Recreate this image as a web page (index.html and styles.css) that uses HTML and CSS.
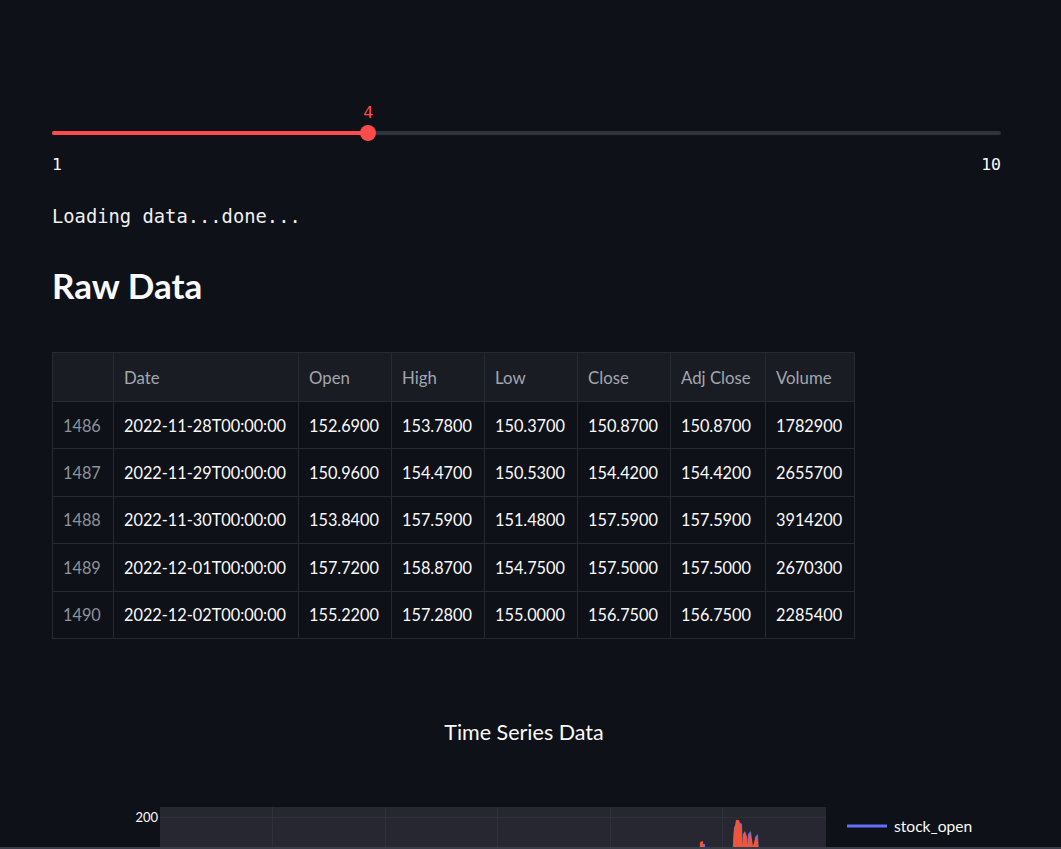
FILE: index.html
```html
<!DOCTYPE html>
<html>
<head>
<meta charset="utf-8">
<link rel="stylesheet" href="styles.css">
</head>
<body>
<main class="main">
  <section class="slider">
    <div class="track">
      <div class="fill" style="width:33.333%"></div>
      <div class="thumb" style="left:33.333%"><span class="thumb-value">4</span></div>
    </div>
    <div class="ticks"><span>1</span><span>10</span></div>
  </section>

  <pre class="text">Loading data...done...</pre>

  <h2 class="heading">Raw Data</h2>

  <table class="df">
    <colgroup>
      <col class="c-idx"><col class="c-date"><col class="c-num"><col class="c-num"><col class="c-num"><col class="c-num"><col class="c-adj"><col class="c-vol">
    </colgroup>
    <thead>
      <tr><th></th><th>Date</th><th>Open</th><th>High</th><th>Low</th><th>Close</th><th>Adj Close</th><th>Volume</th></tr>
    </thead>
    <tbody>
      <tr><th>1486</th><td>2022-11-28T00:00:00</td><td>152.6900</td><td>153.7800</td><td>150.3700</td><td>150.8700</td><td>150.8700</td><td>1782900</td></tr>
      <tr><th>1487</th><td>2022-11-29T00:00:00</td><td>150.9600</td><td>154.4700</td><td>150.5300</td><td>154.4200</td><td>154.4200</td><td>2655700</td></tr>
      <tr><th>1488</th><td>2022-11-30T00:00:00</td><td>153.8400</td><td>157.5900</td><td>151.4800</td><td>157.5900</td><td>157.5900</td><td>3914200</td></tr>
      <tr><th>1489</th><td>2022-12-01T00:00:00</td><td>157.7200</td><td>158.8700</td><td>154.7500</td><td>157.5000</td><td>157.5000</td><td>2670300</td></tr>
      <tr><th>1490</th><td>2022-12-02T00:00:00</td><td>155.2200</td><td>157.2800</td><td>155.0000</td><td>156.7500</td><td>156.7500</td><td>2285400</td></tr>
    </tbody>
  </table>

  <svg class="chart" width="949" height="450" viewBox="0 0 949 450">
    <text class="chart-title" x="472" y="39" text-anchor="middle">Time Series Data</text>
    <rect x="108" y="106" width="666" height="344" fill="#262730"/>
    <g stroke="#2f303b" stroke-width="1">
      <line x1="220.5" y1="106" x2="220.5" y2="450"/>
      <line x1="333.5" y1="106" x2="333.5" y2="450"/>
      <line x1="445.5" y1="106" x2="445.5" y2="450"/>
      <line x1="558.5" y1="106" x2="558.5" y2="450"/>
      <line x1="670.5" y1="106" x2="670.5" y2="450"/>
      <line x1="108" y1="116.5" x2="774" y2="116.5"/>
    </g>
    <text class="tick" x="106" y="121" text-anchor="end">200</text>
    <g>
      <polygon fill="#636efa" points="650,160 651,143 653,143 654,160"/>
      <polygon fill="#636efa" points="655,160 656,147 657,147 658,160"/>
      <polygon fill="#636efa" points="680,160 682,126 687,121 690,123 691,160"/>
      <polygon fill="#636efa" points="694,160 696,133 699,130 700,160"/>
      <polygon fill="#636efa" points="702,160 703,136 706,133 707,160"/>
      <polygon fill="#ef553b" points="647,160 648,141 651,140 652,160"/>
      <polygon fill="#ef553b" points="680,160 682,130 684,119 687,119 689,126 690,145 691,133 693,130 695,136 696,145 697,135 699,132 701,145 703,138 705,136 707,149 708,160"/>
    </g>
    <line x1="795" y1="125" x2="835" y2="125" stroke="#636efa" stroke-width="3"/>
    <text class="legend" x="842" y="131">stock_open</text>
    <line x1="795" y1="151" x2="835" y2="151" stroke="#ef553b" stroke-width="3"/>
    <text class="legend" x="842" y="158">stock_close</text>
  </svg>
</main>
<div class="bottom-bar"></div>
</body>
</html>
```

FILE: styles.css
```css
html {
  overflow: hidden;
}
body {
  margin: 0;
  background: #0e1117;
  color: #fafafa;
  font-family: Lato, "Noto Sans", sans-serif;
}
.main {
  width: 949px;
  margin-left: 52px;
  padding-top: 131px;
}
.slider {
  display: flex;
  flex-direction: column;
}
.track {
  position: relative;
  height: 4px;
  border-radius: 2px;
  background: #31333b;
}
.fill {
  height: 4px;
  border-radius: 2px;
  background: #ff4b4b;
}
.thumb {
  position: absolute;
  top: -6px;
  width: 16px;
  height: 16px;
  margin-left: -8px;
  border-radius: 50%;
  background: #ff4b4b;
}
.thumb-value {
  position: absolute;
  left: 50%;
  bottom: 18px;
  transform: translateX(-50%);
  font-family: "DejaVu Sans Mono", monospace;
  font-size: 16.5px;
  color: #ff4b4b;
  line-height: 20px;
}
.ticks {
  display: flex;
  justify-content: space-between;
  margin-top: 20px;
  font-family: "DejaVu Sans Mono", monospace;
  font-size: 16.5px;
  line-height: 20px;
  color: #fafafa;
}
.text {
  margin: 30px 0 0;
  font-family: "DejaVu Sans Mono", monospace;
  font-size: 18.8px;
  line-height: 24px;
  color: #f0f0f0;
}
.heading {
  margin: 34px 0 0;
  font-family: Lato, sans-serif;
  font-weight: 700;
  font-size: 35px;
  line-height: 44px;
}
.df {
  margin-top: 45px;
  border-collapse: collapse;
  table-layout: fixed;
  width: 803px;
  font-family: Lato, sans-serif;
  font-size: 16.3px;
  border: 1px solid #272a31;
}
.c-idx { width: 61px; }
.c-date { width: 185px; }
.c-num { width: 93px; }
.c-adj { width: 95px; }
.c-vol { width: 89px; }
.df th,
.df td {
  border: 1px solid #272a31;
  padding: 0 10px;
  text-align: left;
  white-space: nowrap;
  font-weight: 400;
}
.df thead th {
  height: 48px;
  background: #1a1c24;
  color: #a3a6ae;
  font-size: 16.8px;
}
.df tbody th {
  color: #8e929a;
}
.df tbody td,
.df tbody th {
  height: 46.4px;
}
.df tbody td {
  color: #fafafa;
}
.chart {
  display: block;
  margin-top: 62px;
}
.chart-title {
  font-family: Lato, sans-serif;
  font-size: 21.5px;
  fill: #fafafa;
}
.tick {
  font-family: Lato, sans-serif;
  font-size: 13px;
  fill: #fafafa;
}
.legend {
  font-family: Lato, sans-serif;
  font-size: 15.6px;
  fill: #fafafa;
}
.bottom-bar {
  position: fixed;
  left: 0;
  right: 0;
  bottom: 0;
  height: 2px;
  background: #3b3e49;
}
```
